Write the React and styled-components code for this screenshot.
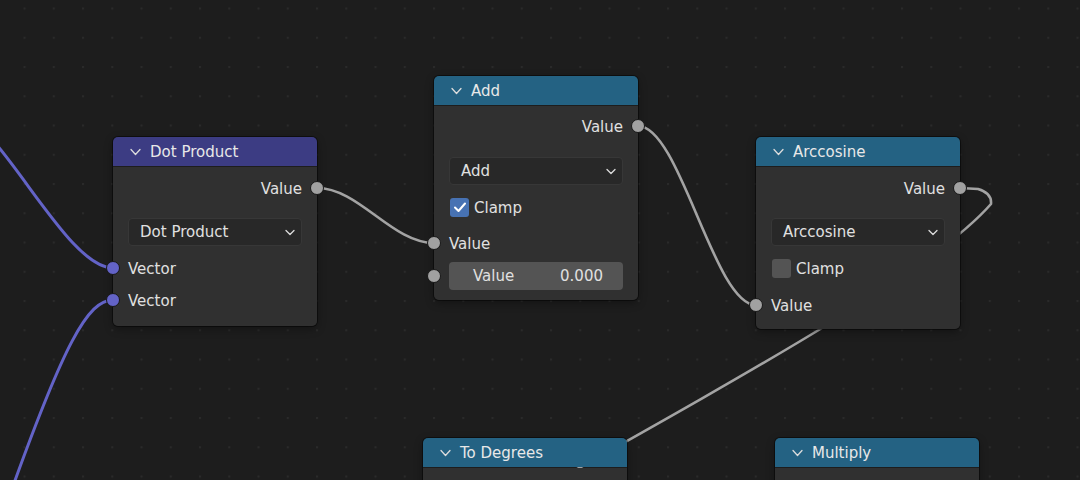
import React from "react";
import styled, { createGlobalStyle } from "styled-components";

const Global = createGlobalStyle`
  html, body { margin: 0; padding: 0; background: #1d1d1d; }
  * { box-sizing: border-box; }
`;

const Canvas = styled.div`
  position: relative;
  width: 1080px;
  height: 480px;
  overflow: hidden;
  background: #1d1d1d;
  font-family: "DejaVu Sans", "Noto Sans", sans-serif;
  font-size: 15px;
  color: #e0e0e0;
`;

const WireLayer = styled.svg`
  position: absolute;
  left: 0;
  top: 0;
  width: 1080px;
  height: 480px;
`;

const NodeBox = styled.div`
  position: absolute;
  left: ${(p) => p.$x}px;
  top: ${(p) => p.$y}px;
  width: 204px;
  display: flex;
  flex-direction: column;
  gap: 1px;
  border-radius: 5px;
  box-shadow: 0 0 0 1px rgba(0, 0, 0, 0.45), 0 3px 8px rgba(0, 0, 0, 0.35);
`;

const Header = styled.div`
  height: 29px;
  background: ${(p) => p.$color};
  border-radius: 5px 5px 0 0;
  display: flex;
  align-items: center;
  gap: 9px;
  padding: 1px 0 0 17px;
  color: #e8e8e8;
  white-space: nowrap;
`;

const Body = styled.div`
  background: #303030;
  border-radius: 0 0 5px 5px;
  display: flex;
  flex-direction: column;
  padding: ${(p) => p.$pt}px 15px ${(p) => p.$pb}px;
  min-height: ${(p) => p.$minh || 0}px;
`;

const Row = styled.div`
  position: relative;
  height: 22px;
  padding-top: 2px;
  margin-top: ${(p) => p.$mt || 0}px;
  display: flex;
  align-items: center;
  justify-content: ${(p) => (p.$out ? "flex-end" : "flex-start")};
  white-space: nowrap;
`;

const Socket = styled.span`
  position: absolute;
  top: 50%;
  ${(p) => (p.$side === "right" ? "right: -22px;" : "left: -22px;")}
  width: 14px;
  height: 14px;
  margin-top: -7px;
  border-radius: 50%;
  background: ${(p) => p.$color || "#a1a1a1"};
  border: 1px solid #181818;
`;

const Dropdown = styled.div`
  margin-top: ${(p) => p.$mt || 0}px;
  height: 28px;
  background: #282828;
  border: 1px solid #373737;
  border-radius: 4px;
  display: flex;
  align-items: center;
  justify-content: space-between;
  padding: 0 6px 0 11px;
  white-space: nowrap;
`;

const NumberField = styled.div`
  position: relative;
  margin-top: ${(p) => p.$mt || 0}px;
  height: 28px;
  background: #545454;
  border-radius: 4px;
  display: flex;
  align-items: center;
  justify-content: space-between;
  padding: 0 20px 0 24px;
`;

const Box = styled.span`
  width: 19px;
  height: 19px;
  margin-top: -2px;
  border-radius: 3px;
  background: ${(p) => (p.$on ? "#4772b3" : "#545454")};
  display: inline-flex;
  align-items: center;
  justify-content: center;
  margin-right: 5px;
  margin-left: 1px;
`;

const Chevron = ({ w = 11, h = 6 }) => (
  <svg width={w} height={h + 2} viewBox={`0 0 ${w} ${h + 2}`}>
    <polyline
      points={`1,1.5 ${w / 2},${h + 0.5} ${w - 1},1.5`}
      fill="none"
      stroke="#dcdcdc"
      strokeWidth="1.3"
      strokeLinecap="round"
      strokeLinejoin="round"
    />
  </svg>
);

const Check = () => (
  <svg width="14" height="12" viewBox="0 0 14 12">
    <polyline
      points="2,6.5 5.5,10 12,2.5"
      fill="none"
      stroke="#ffffff"
      strokeWidth="2"
      strokeLinecap="round"
      strokeLinejoin="round"
    />
  </svg>
);

const NodeHeader = ({ color, title }) => (
  <Header $color={color}>
    <Chevron />
    <span>{title}</span>
  </Header>
);

const VEC = "#6363c7";
const VECTOR_HEAD = "#3c3c83";
const CONV_HEAD = "#246283";

export default function App() {
  return (
    <Canvas>
      <Global />
      <WireLayer>
        <defs>
          <pattern id="grid" x="23.5" y="7.5" width="29.25" height="29.25" patternUnits="userSpaceOnUse">
            <rect x="0" y="0" width="2" height="2" fill="#2a2a2a" />
          </pattern>
        </defs>
        <rect x="0" y="0" width="1080" height="480" fill="url(#grid)" />
        <g fill="none" strokeLinecap="round">
          <path d="M-30,118 C15,152 71,268 113,268" stroke={VEC} strokeWidth="3" />
          <path d="M113,300 C88,300 64,343 8,500" stroke={VEC} strokeWidth="3" />
          <path d="M317,188 C359,188 392,243 434,243" stroke="#a3a3a3" strokeWidth="2.6" />
          <path d="M638,126 C680,126 714,305 756,305" stroke="#a3a3a3" strokeWidth="2.6" />
          <path
            d="M960,188 L978,189 Q992,193 991,204 C935,268 775,358 540,490"
            stroke="#a3a3a3"
            strokeWidth="2.6"
            strokeLinejoin="round"
          />
        </g>
      </WireLayer>

      <NodeBox $x={113} $y={137}>
        <NodeHeader color={VECTOR_HEAD} title="Dot Product" />
        <Body $pt={10} $pb={15}>
          <Row $out>
            Value
            <Socket $side="right" />
          </Row>
          <Dropdown $mt={19}>
            <span>Dot Product</span>
            <Chevron w={10} h={5} />
          </Dropdown>
          <Row $mt={11}>
            <Socket $color={VEC} />
            Vector
          </Row>
          <Row $mt={10}>
            <Socket $color={VEC} />
            Vector
          </Row>
        </Body>
      </NodeBox>

      <NodeBox $x={434} $y={76}>
        <NodeHeader color={CONV_HEAD} title="Add" />
        <Body $pt={9} $pb={10}>
          <Row $out>
            Value
            <Socket $side="right" />
          </Row>
          <Dropdown $mt={20}>
            <span>Add</span>
            <Chevron w={10} h={5} />
          </Dropdown>
          <Row $mt={11}>
            <Box $on>
              <Check />
            </Box>
            Clamp
          </Row>
          <Row $mt={14}>
            <Socket />
            Value
          </Row>
          <NumberField $mt={8}>
            <Socket />
            <span>Value</span>
            <span>0.000</span>
          </NumberField>
        </Body>
      </NodeBox>

      <NodeBox $x={756} $y={137}>
        <NodeHeader color={CONV_HEAD} title="Arccosine" />
        <Body $pt={10} $pb={13}>
          <Row $out>
            Value
            <Socket $side="right" />
          </Row>
          <Dropdown $mt={19}>
            <span>Arccosine</span>
            <Chevron w={10} h={5} />
          </Dropdown>
          <Row $mt={11}>
            <Box />
            Clamp
          </Row>
          <Row $mt={15}>
            <Socket />
            Value
          </Row>
        </Body>
      </NodeBox>

      <NodeBox $x={423} $y={438}>
        <NodeHeader color={CONV_HEAD} title="To Degrees" />
        <Body $pt={0} $pb={0} $minh={60} />
      </NodeBox>

      <NodeBox $x={775} $y={438}>
        <NodeHeader color={CONV_HEAD} title="Multiply" />
        <Body $pt={0} $pb={0} $minh={60} />
      </NodeBox>
    </Canvas>
  );
}
